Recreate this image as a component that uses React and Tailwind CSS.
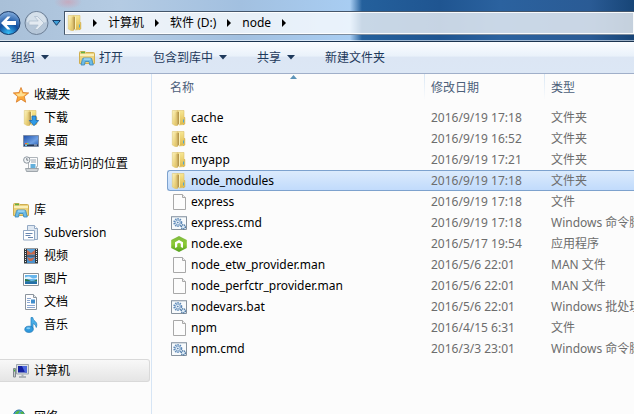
import React from "react";

const FONT = "font-['Noto_Sans','Noto_Sans_CJK_SC',sans-serif]";

function Folder({ arrow }) {
  return (
    <svg width="16" height="16" viewBox="0 0 16 16" className="shrink-0">
      <defs>
        <linearGradient id="leaf" x1="0" y1="0" x2="1" y2="1">
          <stop offset="0" stopColor="#fbf3c0" />
          <stop offset="1" stopColor="#e0bd50" />
        </linearGradient>
        <linearGradient id="front" x1="0" y1="0" x2="0" y2="1">
          <stop offset="0" stopColor="#f7e794" />
          <stop offset="1" stopColor="#dfb949" />
        </linearGradient>
      </defs>
      <path d="M6 .5h7v14l-5 .5z" fill="url(#front)" stroke="#dcc06a" strokeWidth=".6" />
      <path d="M13 7.500h.8v6.500l-1.800.8" fill="#e3c25b" stroke="#cfa942" strokeWidth=".6" />
      <path d="M1.300 .5h5.200v15L4.500 15.800 1.300 14z" fill="url(#leaf)" stroke="#dec877" strokeWidth=".6" />
      <path d="M4.800 2.500L7 1v14l-2.200.8z" fill="#ddc374" />
      <path d="M6.500 2.200L8 1.500v12.300l-1.500 1.500z" fill="#b6974c" />
      <path d="M8.500 1.500v13" stroke="#faf0b4" />
      {arrow ? (
        <path d="M9 6h4v4.500h2.700L11 15.700 6.300 10.500H9z" fill="#2f9be8" stroke="#1c66ad" strokeWidth=".8" />
      ) : (
        <path d="M12.500 9.500v3" stroke="#4fa8cf" />
      )}
    </svg>
  );
}

function Library() {
  return (
    <svg width="16" height="16" viewBox="0 0 16 16" className="shrink-0">
      <path d="M.5 13.500V2.500q0-1 1-1H6l1 1h7.500q1 0 1 1v10z" fill="#ecd27c" stroke="#cfae50" />
      <path d="M2 2.500h4" stroke="#63b044" strokeWidth="1.500" />
      <path d="M1 5h14" stroke="#faefb9" strokeWidth="2" />
      <path d="M2 15l1.300-5.500q.2-1.500 1.400-1.500h6.800q1.200 0 1.400 1.500l1.400 5.500h-3.500l-.8-3.500H6.200L5.500 15z" fill="#6dbbe6" stroke="#3a86b8" strokeWidth=".8" />
      <path d="M5 9h6.500" stroke="#c4e9fb" />
    </svg>
  );
}

function Star() {
  return (
    <svg width="16" height="16" viewBox="0 0 16 16" className="shrink-0">
      <path d="M8 .5l2 5 5.700.4-4.400 3.700 1.400 5.600L8 12.200 3.300 15.200l1.400-5.600L.3 5.900 6 5.500z" fill="#fba93a" stroke="#d97c2a" strokeWidth=".8" strokeLinejoin="round" />
      <path d="M8 2.500l1.300 3.900 4 .4-3 2.500-5 .2L2.700 6.800l4-.4z" fill="#ffdf92" />
    </svg>
  );
}

function Desktop() {
  return (
    <svg width="16" height="16" viewBox="0 0 16 16" className="shrink-0">
      <defs>
        <linearGradient id="desk" x1="0" y1="0" x2="1" y2="1">
          <stop offset="0" stopColor="#1c4ca8" />
          <stop offset=".6" stopColor="#6ea0e4" />
          <stop offset="1" stopColor="#2257ae" />
        </linearGradient>
      </defs>
      <path d="M.5 2.500h15v11H.5z" fill="url(#desk)" stroke="#7c8ca6" />
      <path d="M1 11.500h14v1.500H1z" fill="#27364f" />
      <path d="M2 10h2v1.500H2z" fill="#f26b3a" />
      <path d="M4 10h1.500v1.500H4z" fill="#8fd14a" />
      <path d="M2 11.500h2V13H2z" fill="#63c1f2" />
      <path d="M11 12h3" stroke="#b8c6dc" />
    </svg>
  );
}

function Recent() {
  return (
    <svg width="16" height="16" viewBox="0 0 16 16" className="shrink-0">
      <path d="M5.500 1.500h9v9h-1v3h-8z" fill="#fdfdfd" stroke="#aeb4ba" />
      <path d="M8 4h5M8 6h5" stroke="#9aa5b0" />
      <path d="M7.500 8h5v4h-5z" fill="#64b0dc" />
      <path d="M2.500 12.500h13l-1 3h-11z" fill="#cdd2d6" stroke="#8d959c" strokeWidth=".8" />
      <circle cx="3.800" cy="4" r="3.200" fill="#f1f4f6" stroke="#8e979f" />
      <path d="M3.800 2v2.200h1.500" fill="none" stroke="#55606a" strokeWidth=".8" />
    </svg>
  );
}

function Subversion() {
  return (
    <svg width="16" height="16" viewBox="0 0 16 16" className="shrink-0">
      <path d="M4.500.5h7l3 3v11h-10z" fill="#dfe8f2" stroke="#93a9c4" />
      <path d="M11.500.5v3h3" fill="#fff" stroke="#93a9c4" />
      <path d="M.5 5.500h11v9.500H.5z" fill="#fff" stroke="#93a9c4" />
      <path d="M2.500 8.500h7M2.500 10.500h5M5 12.500h5" stroke="#6886b0" />
    </svg>
  );
}

function Video() {
  return (
    <svg width="16" height="16" viewBox="0 0 16 16" className="shrink-0">
      <path d="M1 .5h14v15H1z" fill="#33383c" />
      <path d="M2.500 1v14M13.500 1v14" stroke="#e6e9eb" strokeDasharray="1 1" />
      <path d="M4 1h8v6.500H4z" fill="#5b9fd6" />
      <path d="M4 8.500h8V15H4z" fill="#4b92ce" />
      <path d="M4 2l4 3 4-3v4.500H9L4 7zM4 9l4 1.500L12 9l-3 4H6z" fill="#c76a4c" />
    </svg>
  );
}

function Photo() {
  return (
    <svg width="16" height="16" viewBox="0 0 16 16" className="shrink-0">
      <path d="M.5 2.500h15v12H.5z" fill="#fff" stroke="#8a9197" />
      <path d="M2 4h12v9H2z" fill="#66b5ec" />
      <path d="M2 6.500q4-2 6 0t6 0v1.500H2z" fill="#dff1fb" />
      <path d="M2 8q3 0 5 1.500t7-1v2H2z" fill="#2b7548" />
      <path d="M2 10.500h12V13H2z" fill="#236fa8" />
    </svg>
  );
}

function Doc() {
  return (
    <svg width="16" height="16" viewBox="0 0 16 16" className="shrink-0">
      <path d="M2.500.5h8l3 3v12h-11z" fill="#fdfdfe" stroke="#8b949d" />
      <path d="M10.500.5v3h3" fill="#e7ebee" stroke="#8b949d" />
      <path d="M4 4.500h4M4 6.500h3M4 8.500h3M4 11.500h8M4 13.500h8" stroke="#8aa6cf" />
      <path d="M8 5.500h4v4H8z" fill="#3f8dcc" />
    </svg>
  );
}

function Music() {
  return (
    <svg width="16" height="16" viewBox="0 0 16 16" className="shrink-0">
      <path d="M8 .5h1.700q.3 2.500 2.300 3.700 2.800 2 1.300 6.300-.7-3.500-3.300-4v6.200H8z" fill="#48aee8" stroke="#1f7cba" strokeWidth=".7" />
      <ellipse cx="6" cy="12.300" rx="4.200" ry="3.100" fill="#2f9ade" stroke="#1f76b4" strokeWidth=".7" />
      <ellipse cx="5.300" cy="11.300" rx="2" ry="1" fill="#84cdf4" />
    </svg>
  );
}

function Computer() {
  return (
    <svg width="16" height="16" viewBox="0 0 16 16" className="shrink-0">
      <path d="M.5 5.500h2v8.500h-2z" fill="#c9cdcf" stroke="#82898e" />
      <path d="M1 7.500h1" stroke="#43b53c" strokeWidth="2" />
      <path d="M3.500 1.500h12v9.500h-12z" fill="#dadfe4" stroke="#9da5ad" />
      <path d="M5 3h9v6.500H5z" fill="#1420a0" />
      <path d="M9 3h5v6.500h-2z" fill="#4a66dc" />
      <path d="M8.500 11.500h2v2h-2z" fill="#a9b0b6" />
      <path d="M6 14h7" stroke="#9aa2a9" strokeWidth="1.500" />
    </svg>
  );
}

function Network() {
  return (
    <svg width="16" height="16" viewBox="0 0 16 16" className="shrink-0">
      <circle cx="6" cy="6.500" r="5.500" fill="#4aa3e0" stroke="#2b6ea8" />
      <path d="M2 4q2-3 5-2.500L6 4 3 6zM7 3l3-.5L11 5H8z" fill="#55b548" />
      <path d="M5.500 5.500h10v7h-10z" fill="#2540c4" stroke="#c4ccd6" />
      <path d="M8 14.500h6" stroke="#9aa2a9" />
    </svg>
  );
}

function Blank() {
  return (
    <svg width="16" height="16" viewBox="0 0 16 16" className="shrink-0">
      <path d="M2.500.5h9l3 3v12h-12z" fill="#fcfcfc" stroke="#a8a8a8" />
      <path d="M11.500.5v3h3" fill="#eee" stroke="#a8a8a8" />
    </svg>
  );
}

function Script() {
  return (
    <svg width="16" height="16" viewBox="0 0 16 16" className="shrink-0">
      <path d="M.5 1.500h15v13H.5z" fill="#f7fafc" stroke="#87929e" />
      <path d="M1 2h14" stroke="#b4bfca" />
      <circle cx="6.800" cy="7.500" r="3.600" fill="none" stroke="#5b88b8" strokeWidth="1.800" strokeDasharray="1.400 .9" />
      <circle cx="6.800" cy="7.500" r="2.400" fill="#e2edf7" stroke="#6e97c2" strokeWidth=".8" />
      <circle cx="6.800" cy="7.500" r=".8" fill="#4c78a8" />
      <circle cx="12.300" cy="11.800" r="2.100" fill="#dbe9f5" stroke="#44719f" strokeWidth="1.300" strokeDasharray="1.300 .6" />
    </svg>
  );
}

function NodeIcon() {
  return (
    <svg width="16" height="16" viewBox="0 0 16 16" className="shrink-0">
      <defs>
        <linearGradient id="hex" x1="0" y1="0" x2="0" y2="1">
          <stop offset="0" stopColor="#7fb843" />
          <stop offset=".5" stopColor="#8ccb34" />
          <stop offset="1" stopColor="#55a01f" />
        </linearGradient>
      </defs>
      <path d="M8 0l7.800 4v8L8 16 .2 12V4z" fill="url(#hex)" />
      <path d="M4 12V6.300L8 4l4 2.300V12l-2.200-1V7.700L8 6.700l-1.800 1V11z" fill="#fff" />
    </svg>
  );
}

const GROUPS = [
  { icon: <Star />, label: "收藏夹", items: [[<Folder arrow />, "下载"], [<Desktop />, "桌面"], [<Recent />, "最近访问的位置"]] },
  { icon: <Library />, label: "库", items: [[<Subversion />, "Subversion"], [<Video />, "视频"], [<Photo />, "图片"], [<Doc />, "文档"], [<Music />, "音乐"]] },
  { icon: <Computer />, label: "计算机", items: [], selected: true },
  { icon: <Network />, label: "网络", items: [] },
];

const FILES = [
  [Folder, "cache", "2016/9/19 17:18", "文件夹"],
  [Folder, "etc", "2016/9/19 16:52", "文件夹"],
  [Folder, "myapp", "2016/9/19 17:21", "文件夹"],
  [Folder, "node_modules", "2016/9/19 17:18", "文件夹"],
  [Blank, "express", "2016/9/19 17:18", "文件"],
  [Script, "express.cmd", "2016/9/19 17:18", "Windows 命令脚本"],
  [NodeIcon, "node.exe", "2016/5/17 19:54", "应用程序"],
  [Blank, "node_etw_provider.man", "2016/5/6 22:01", "MAN 文件"],
  [Blank, "node_perfctr_provider.man", "2016/5/6 22:01", "MAN 文件"],
  [Script, "nodevars.bat", "2016/5/6 22:01", "Windows 批处理文件"],
  [Blank, "npm", "2016/4/15 6:31", "文件"],
  [Script, "npm.cmd", "2016/3/3 23:01", "Windows 命令脚本"],
];

function Caret() {
  return (
    <svg width="8" height="5" viewBox="0 0 8 5" className="shrink-0">
      <path d="M0 0h8L4 4.500z" fill="#1e395b" />
    </svg>
  );
}

function Crumb({ children }) {
  return (
    <>
      <svg width="4" height="8" viewBox="0 0 4 8" className="shrink-0">
        <path d="M0 0l4 4-4 4z" fill="#000" />
      </svg>
      {children && <button className="whitespace-nowrap">{children}</button>}
    </>
  );
}

function AddressBar() {
  return (
    <header className="h-[42px] border-b border-[#1b3450] bg-[radial-gradient(ellipse_14px_7px_at_68px_2px,#cf9fb2b0,transparent),linear-gradient(90deg,#a9c0d8_0,#b4cbe3_120px,#a2c0e0_240px,#a8cdf2_350px,#24609c_362px,#1f5591_440px,#2b629f_500px,#2a5b95_590px,#174577_100%)] pt-[11px] inset-shadow-[0_-1px_0_#ffffff90]">
      <div className="flex h-6 items-center">
        <button aria-label="后退" className="-ml-1 shrink-0">
          <svg width="25" height="26" viewBox="0 0 25 26">
            <defs>
              <radialGradient id="back" cx=".5" cy=".95" r=".9">
                <stop offset="0" stopColor="#36c0f8" />
                <stop offset=".5" stopColor="#124f9f" />
                <stop offset="1" stopColor="#7ba6d8" />
              </radialGradient>
            </defs>
            <circle cx="12.500" cy="13" r="11.500" fill="url(#back)" stroke="#1c3a66" />
            <path d="M5 13l6.500-6.500h3L10.800 11H20v4h-9.200l3.700 4.500h-3z" fill="#fff" />
          </svg>
        </button>
        <button aria-label="前进" className="ml-[3px] shrink-0">
          <svg width="25" height="26" viewBox="0 0 25 26">
            <circle cx="12.500" cy="13" r="11.500" fill="#b5c6d8" stroke="#6c7f96" />
            <path d="M2.500 12a10 10 0 0 1 20 0q-10 4-20 0z" fill="#d5e0ea" />
            <path d="M20 13l-6.500-6.500h-3l3.700 4.500H5v4h9.200l-3.700 4.500h3z" fill="#e3eaf1" stroke="#a9bacb" strokeWidth=".7" />
          </svg>
        </button>
        <button aria-label="最近浏览的页面" className="ml-[3px] shrink-0">
          <svg width="9" height="6" viewBox="0 0 9 6">
            <path d="M.7.500h7.600L4.500 5.300z" fill="#3fa0d8" stroke="#173f6b" strokeLinejoin="round" />
          </svg>
        </button>
        <nav className="ml-[3px] flex h-6 min-w-0 flex-1 items-center border border-r-0 border-[#44566b] border-b-[#7d8c9d] bg-white/75 pl-0.5 inset-shadow-[0_0_0_1px_#ffffffe0]">
          <Folder />
          <div className="ml-2.5 flex items-center gap-[11px]">
            <Crumb>计算机</Crumb>
            <Crumb>软件 (D:)</Crumb>
            <Crumb>node</Crumb>
            <Crumb />
          </div>
        </nav>
      </div>
    </header>
  );
}

function Toolbar() {
  return (
    <div className="flex h-8 items-center gap-[30px] border-b border-[#a0afc9] bg-[linear-gradient(#fbfdff_0,#e9f1fa_46%,#dce6f4_48%,#dce7f5_100%)] pl-[11px] text-[#1e395b]">
      <button className="flex items-center gap-1.5">组织<Caret /></button>
      <button className="flex items-center gap-1"><Library />打开</button>
      <button className="flex items-center gap-1.5">包含到库中<Caret /></button>
      <button className="flex items-center gap-1.5">共享<Caret /></button>
      <button>新建文件夹</button>
    </div>
  );
}

function Sidebar() {
  return (
    <aside className="flex w-[152px] shrink-0 flex-col gap-[23px] overflow-hidden border-r border-[#d6e5f5] pt-[9px]">
      {GROUPS.map((g) => (
        <section key={g.label}>
          <a
            href="#"
            className={
              g.selected
                ? "mr-px flex h-[23px] items-center gap-[5px] rounded-r-[3px] border border-l-0 border-[#d9d9d9] bg-linear-to-b from-[#f8f8f8] to-[#e5e5e5] pl-[13px]"
                : "flex h-[23px] items-center gap-[5px] pl-[13px]"
            }
          >
            {g.icon}
            {g.label}
          </a>
          {g.items.map(([icon, label]) => (
            <a key={label} href="#" className="flex h-[23px] items-center gap-[5px] pl-[23px]">
              {icon}
              {label}
            </a>
          ))}
        </section>
      ))}
    </aside>
  );
}

const HEAD = "bg-[linear-gradient(#d9e7f5,#fcfcfc)] bg-[length:1px_26px] bg-no-repeat p-0 pb-[5px] pl-[7px] font-normal";

function FileTable() {
  return (
    <main className="min-w-0 flex-1 overflow-hidden pl-[15px]">
      <table className="w-full table-fixed border-separate border-spacing-0 text-left whitespace-nowrap">
        <colgroup>
          <col className="w-[257px]" />
          <col className="w-[120px]" />
          <col />
        </colgroup>
        <thead className="text-[#4c607a]">
          <tr>
            <th className="relative h-[33px] p-0 pb-[5px] pl-[3px] font-normal">
              名称
              <svg width="7" height="4" viewBox="0 0 7 4" className="absolute top-px left-[123px]">
                <path d="M0 4l3.500-4L7 4z" fill="#5c93b8" />
              </svg>
            </th>
            <th className={HEAD}>修改日期</th>
            <th className={HEAD}>类型</th>
          </tr>
        </thead>
        <tbody>
          {FILES.map(([Icon, name, date, type]) => {
            const on = name === "node_modules";
            const cell = on
              ? "h-[21px] border-y border-[#7da2ce] bg-linear-to-b from-[#dcebfc] to-[#c1dbfc] p-0 pl-[7px] text-[#6d6d6d]"
              : "h-[21px] p-0 pl-[7px] text-[#6d6d6d]";
            return (
              <tr key={name}>
                <td
                  className={
                    on
                      ? "h-[21px] rounded-l-[3px] border border-r-0 border-[#7da2ce] bg-linear-to-b from-[#dcebfc] to-[#c1dbfc] p-0 pl-[3px]"
                      : "h-[21px] p-0 pl-1"
                  }
                >
                  <div className="flex items-center gap-1">
                    <Icon />
                    {name}
                  </div>
                </td>
                <td className={cell}>{date}</td>
                <td className={cell}>{type}</td>
              </tr>
            );
          })}
        </tbody>
      </table>
    </main>
  );
}

export default function App() {
  return (
    <div className={`flex h-screen flex-col overflow-hidden bg-[#fcfcfc] text-xs text-black ${FONT}`}>
      <AddressBar />
      <Toolbar />
      <div className="flex min-h-0 flex-1">
        <Sidebar />
        <FileTable />
      </div>
    </div>
  );
}
